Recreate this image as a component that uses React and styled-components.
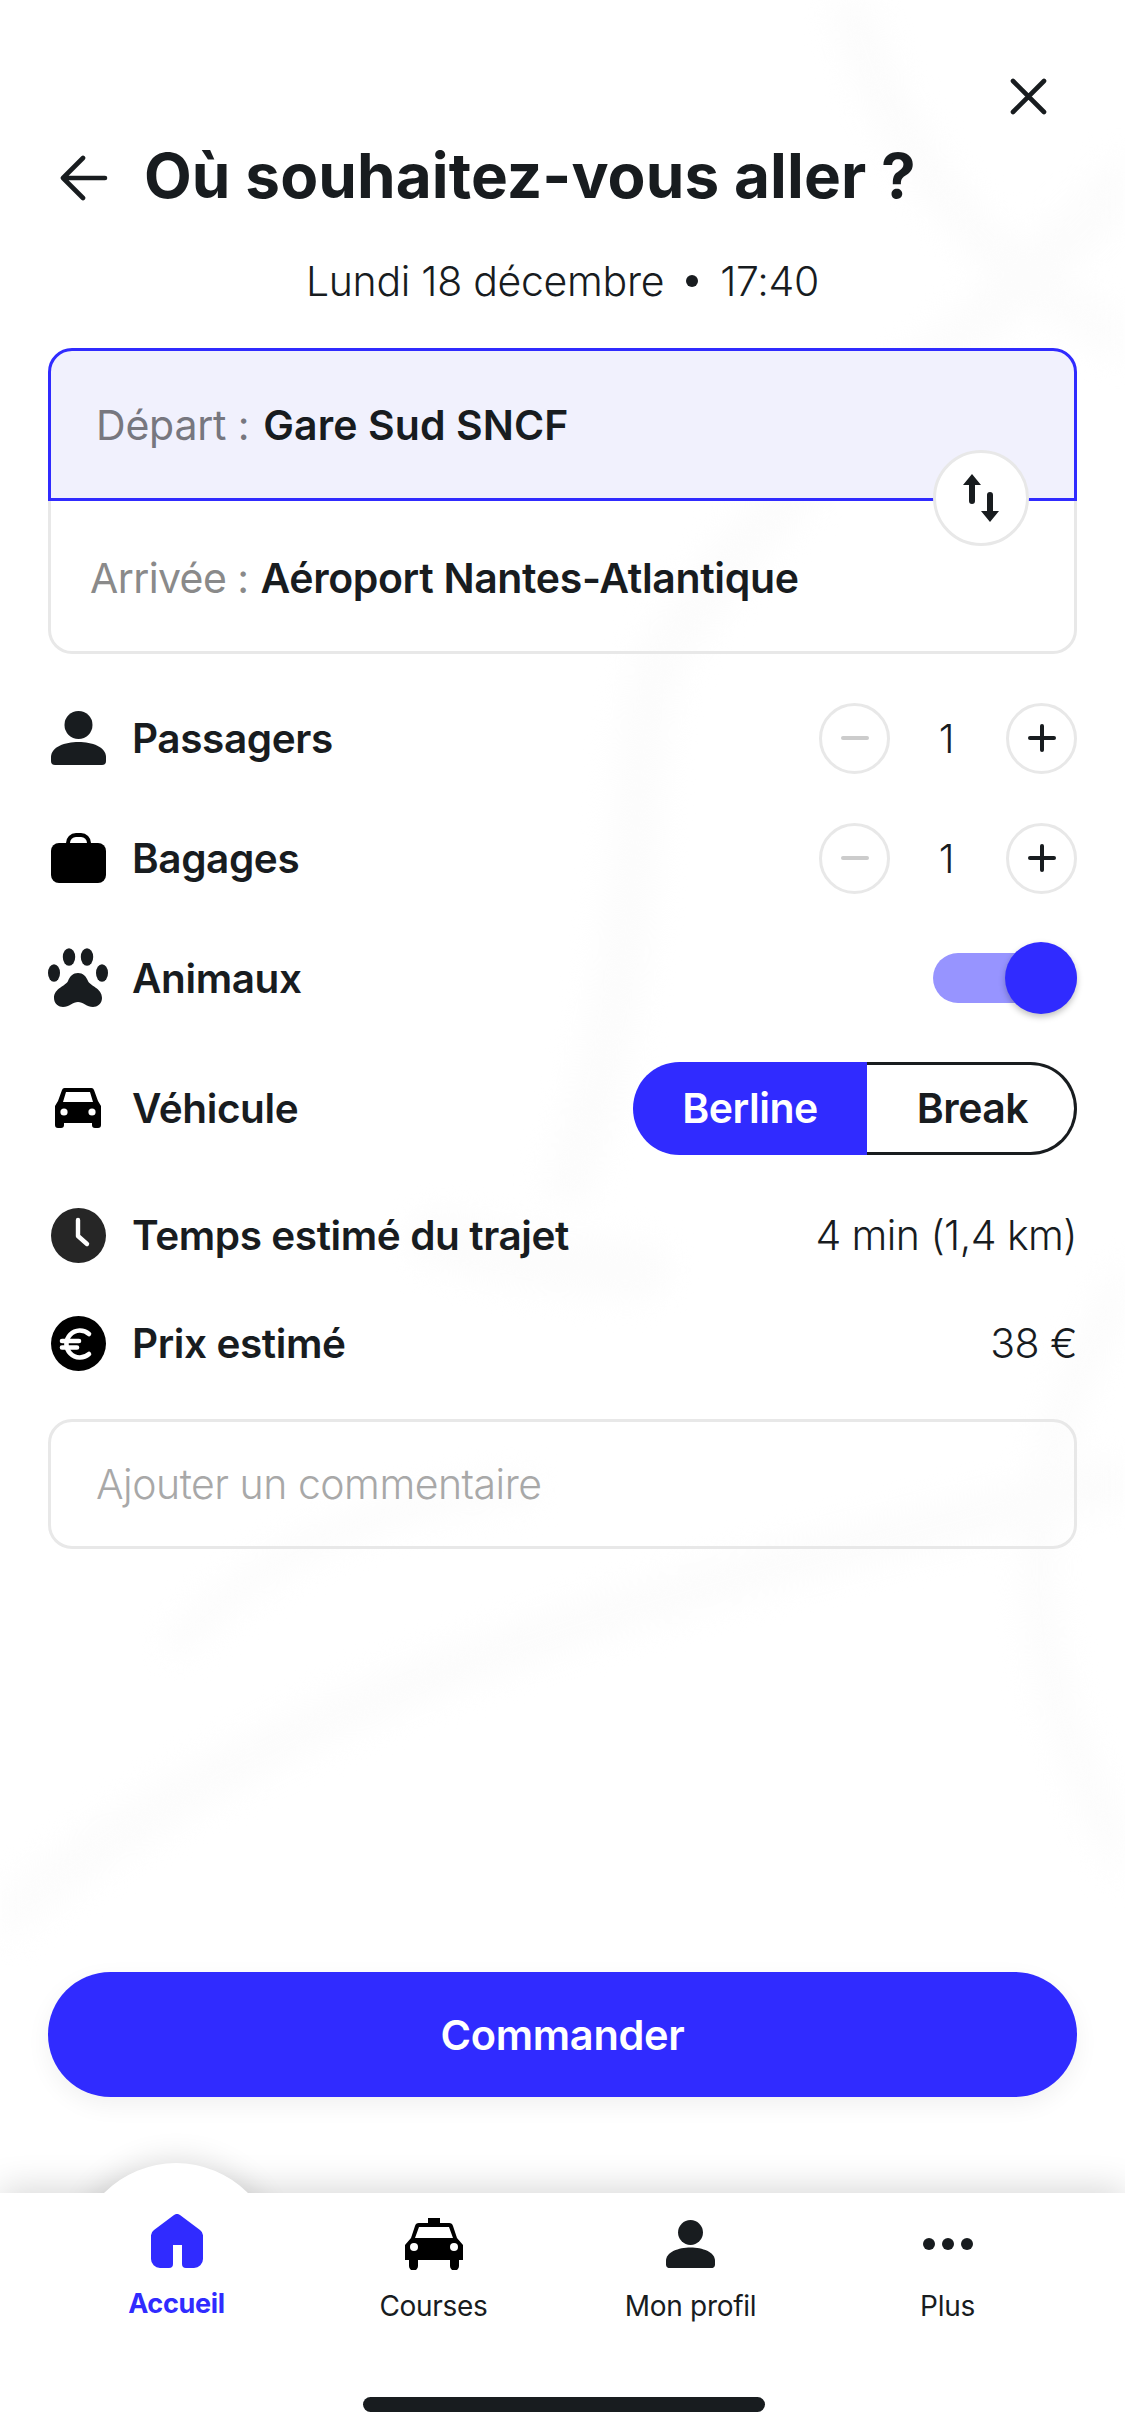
import React from "react";
import styled, { createGlobalStyle } from "styled-components";

const INK = "#181c1f";
const BLUE = "#302bff";
const LINE = "#e8e8e8";

const GlobalStyle = createGlobalStyle`
   html, body {
      margin: 0;
      padding: 0;
      background: #fff;
   }
   * {
      box-sizing: border-box;
   }
`;

const Page = styled.div`
   position: relative;
   width: 1125px;
   height: 2436px;
   overflow: hidden;
   display: flex;
   flex-direction: column;
   background: #fff;
   color: ${INK};
   font-family: "Inter", "Liberation Sans", sans-serif;
`;

const MapLayer = styled.svg`
   position: absolute;
   inset: 0;
   filter: blur(14px);
`;

const Content = styled.div`
   position: relative;
   flex: 1;
   display: flex;
   flex-direction: column;
   padding: 0 48px;
`;

const CloseRow = styled.div`
   display: flex;
   justify-content: flex-end;
   padding: 78px 30px 0 0;
   height: 143px;
`;

const TitleRow = styled.div`
   height: 70px;
   display: flex;
   align-items: center;
   gap: 36px;
   padding-left: 12px;
`;

const Title = styled.h1`
   margin: 0 0 5px;
   font-size: 62px;
   font-weight: 700;
   letter-spacing: 0.1px;
   white-space: nowrap;
`;

const DateLine = styled.div`
   margin: 38px 0 37px;
   height: 60px;
   display: flex;
   align-items: center;
   justify-content: center;
   gap: 22px;
   font-size: 41px;
   font-weight: 300;
   letter-spacing: -0.3px;
`;

const Bullet = styled.span`
   width: 12px;
   height: 12px;
   border-radius: 50%;
   background: ${INK};
`;

const RouteCard = styled.div`
   position: relative;
`;

const RouteField = styled.div`
   height: 153px;
   display: flex;
   align-items: center;
   gap: ${(p) => (p.$active ? 14 : 12)}px;
   padding-left: ${(p) => (p.$active ? 45 : 39)}px;
   padding-top: ${(p) => (p.$active ? 0 : 3)}px;
   font-size: 41px;
   white-space: nowrap;
   background: ${(p) => (p.$active ? "#f1f1fd" : "transparent")};
   border: 3px solid ${(p) => (p.$active ? BLUE : LINE)};
   border-top: ${(p) => (p.$active ? `3px solid ${BLUE}` : "none")};
   border-radius: ${(p) => (p.$active ? "24px 24px 0 0" : "0 0 24px 24px")};
`;

const RouteLabel = styled.span`
   color: ${(p) => (p.$active ? "#77777f" : "#8a8a8a")};
   font-weight: 400;
   letter-spacing: ${(p) => (p.$active ? -0.2 : -0.6)}px;
`;

const RouteValue = styled.span`
   font-weight: 600;
   letter-spacing: ${(p) => (p.$active ? 0.1 : -0.35)}px;
`;

const SwapButton = styled.button`
   position: absolute;
   top: 102px;
   right: 48px;
   width: 96px;
   height: 96px;
   padding: 0;
   border-radius: 50%;
   background: #fff;
   border: 3px solid ${LINE};
   display: flex;
   align-items: center;
   justify-content: center;
`;

const Rows = styled.div`
   margin-top: 24px;
   display: flex;
   flex-direction: column;
`;

const Row = styled.div`
   height: ${(p) => p.$h}px;
   display: flex;
   align-items: center;
   justify-content: space-between;
`;

const RowLabel = styled.div`
   display: flex;
   align-items: center;
   gap: 24px;
   font-size: 40.5px;
   font-weight: 600;
   letter-spacing: -0.4px;
   white-space: nowrap;
`;

const IconSlot = styled.span`
   width: 60px;
   display: flex;
   justify-content: center;
   align-items: center;
`;

const RowValue = styled.div`
   font-size: 41px;
   font-weight: 300;
   letter-spacing: -0.55px;
   white-space: nowrap;
`;

const Stepper = styled.div`
   display: flex;
   align-items: center;
`;

const RoundButton = styled.button`
   width: 71px;
   height: 71px;
   padding: 0;
   border-radius: 50%;
   background: #fff;
   border: 3px solid ${LINE};
   display: flex;
   align-items: center;
   justify-content: center;
`;

const Count = styled.span`
   width: 116px;
   padding-right: 3px;
   text-align: center;
   font-size: 40px;
   font-weight: 300;
`;

const Toggle = styled.div`
   position: relative;
   width: 144px;
   height: 50px;
   border-radius: 25px;
   background: #9794ff;
`;

const Knob = styled.span`
   position: absolute;
   right: 0;
   top: -11px;
   width: 72px;
   height: 72px;
   border-radius: 50%;
   background: ${BLUE};
   box-shadow: 0 3px 6px rgba(0, 0, 0, 0.25);
`;

const Segmented = styled.div`
   width: 444px;
   height: 93px;
   display: flex;
`;

const Segment = styled.div`
   width: ${(p) => (p.$active ? 234 : 210)}px;
   display: flex;
   align-items: center;
   justify-content: center;
   padding-left: ${(p) => (p.$active ? 0 : 4)}px;
   font-size: 41px;
   font-weight: 600;
   letter-spacing: -0.5px;
   background: ${(p) => (p.$active ? BLUE : "#fff")};
   color: ${(p) => (p.$active ? "#fff" : INK)};
   border: ${(p) => (p.$active ? "none" : `3px solid ${INK}`)};
   border-left: none;
   border-radius: ${(p) => (p.$active ? "47px 0 0 47px" : "0 47px 47px 0")};
`;

const CommentBox = styled.div`
   margin-top: 25px;
   height: 130px;
   display: flex;
   align-items: center;
   padding-left: 45px;
   border: 3px solid ${LINE};
   border-radius: 24px;
   font-size: 41px;
   font-weight: 300;
   letter-spacing: -0.5px;
   color: #a8a8a8;
`;

const Spacer = styled.div`
   flex: 1;
`;

const OrderButton = styled.button`
   height: 125px;
   margin-bottom: 96px;
   border: none;
   border-radius: 63px;
   background: ${BLUE};
   color: #fff;
   font-family: inherit;
   font-size: 41.5px;
   font-weight: 600;
   letter-spacing: -0.3px;
   box-shadow: 0 8px 24px rgba(0, 0, 0, 0.06);
`;

const NavShell = styled.nav`
   position: relative;
   height: 243px;
   background: #fff;
   box-shadow: 0 -4px 34px rgba(0, 0, 0, 0.16);
`;

const NavBump = styled.span`
   position: absolute;
   left: 75px;
   top: -30px;
   width: 202px;
   height: 202px;
   border-radius: 50%;
   background: #fff;
   box-shadow: 0 -4px 30px rgba(0, 0, 0, 0.12);
`;

const NavItems = styled.div`
   position: relative;
   height: 100%;
   background: #fff;
   display: grid;
   grid-template-columns: repeat(4, 257px);
   padding-left: 48px;
`;

const NavItem = styled.div`
   display: flex;
   flex-direction: column;
   align-items: center;
   padding-top: ${(p) => (p.$active ? 20 : 23)}px;
`;

const NavIcon = styled.div`
   height: 56px;
   display: flex;
   align-items: center;
   justify-content: center;
`;

const NavLabel = styled.span`
   margin-top: ${(p) => (p.$active ? 19 : 18)}px;
   font-size: ${(p) => (p.$active ? 27 : 28)}px;
   line-height: 32px;
   letter-spacing: -0.3px;
   font-weight: ${(p) => (p.$active ? 700 : 400)};
   color: ${(p) => (p.$active ? BLUE : INK)};
`;

const HomeBar = styled.span`
   position: absolute;
   left: 363px;
   bottom: 24px;
   width: 402px;
   height: 15px;
   border-radius: 8px;
   background: ${INK};
`;

const CloseIcon = () => (
   <svg width="37" height="37" viewBox="0 0 37 37" fill="none" stroke={INK} strokeWidth="4.6" strokeLinecap="round">
      <path d="M3 3 L34 34 M34 3 L3 34" />
   </svg>
);

const BackIcon = () => (
   <svg width="48" height="46" viewBox="0 0 48 46" fill="none" stroke={INK} strokeWidth="4.6" strokeLinecap="round" strokeLinejoin="round">
      <path d="M45 23 H4 M23 3 L3 23 L23 43" />
   </svg>
);

const SwapIcon = () => (
   <svg width="36" height="48" viewBox="0 0 36 48" fill={INK}>
      <path d="M9 0 L18 11 H12 V27 a3 3 0 0 1 -6 0 V11 H0 Z" />
      <path d="M27 48 L18 37 H24 V21 a3 3 0 0 1 6 0 V37 H36 Z" />
   </svg>
);

const MinusIcon = () => (
   <svg width="28" height="6" viewBox="0 0 28 6">
      <rect y="1" width="28" height="4" rx="2" fill="#cccccc" />
   </svg>
);

const PlusIcon = () => (
   <svg width="28" height="28" viewBox="0 0 28 28" fill={INK}>
      <rect y="12" width="28" height="4" rx="2" />
      <rect x="12" width="4" height="28" rx="2" />
   </svg>
);

const PersonIcon = ({ size = 55 }) => (
   <svg width={size} height={(size * 54) / 55} viewBox="0 0 55 54" fill={INK}>
      <circle cx="27.5" cy="14" r="14" />
      <path d="M0 46 C0 36 14 31 27.5 31 S55 36 55 46 V50 a4 4 0 0 1 -4 4 H4 a4 4 0 0 1 -4 -4 Z" />
   </svg>
);

const CaseIcon = () => (
   <svg width="55" height="50" viewBox="0 0 55 50">
      <path d="M17 12 V10 a8 8 0 0 1 8 -8 h5 a8 8 0 0 1 8 8 v2" fill="none" stroke="#000" strokeWidth="4" />
      <rect y="10" width="55" height="40" rx="8" fill="#000" />
   </svg>
);

const PawIcon = () => (
   <svg width="60" height="60" viewBox="0 0 60 60" fill={INK}>
      <ellipse cx="21" cy="9" rx="6.2" ry="8.8" />
      <ellipse cx="39" cy="9" rx="6.2" ry="8.8" />
      <ellipse cx="6" cy="25" rx="6" ry="8.8" />
      <ellipse cx="54" cy="25" rx="6" ry="8.8" />
      <path d="M30 25 c5 0 8 3 10 8 c2 5 14 7 14 17 c0 6 -5 9 -9 9 c-6 0 -10 -5 -15 -5 c-5 0 -9 5 -15 5 c-4 0 -9 -3 -9 -9 c0 -10 12 -12 14 -17 c2 -5 5 -8 10 -8 Z" />
   </svg>
);

const CarIcon = () => (
   <svg width="46" height="40" viewBox="0 0 46 40">
      <path
         fillRule="evenodd"
         d="M10 0 H36 a3 3 0 0 1 3 2 L43 13 L46 18 V37 a3 3 0 0 1 -3 3 H40 a3 3 0 0 1 -3 -3 V35 H9 V37 a3 3 0 0 1 -3 3 H3 a3 3 0 0 1 -3 -3 V18 L3 13 L7 2 a3 3 0 0 1 3 -2 Z M11 4 L8 14 H38 L35 4 Z"
         fill="#000"
      />
      <circle cx="9" cy="24" r="3.6" fill="#fff" />
      <circle cx="37" cy="24" r="3.6" fill="#fff" />
   </svg>
);

const ClockIcon = () => (
   <svg width="55" height="55" viewBox="0 0 55 55">
      <circle cx="27.5" cy="27.5" r="27.5" fill="#262626" />
      <path d="M27 12 V28 L36 36" fill="none" stroke="#fff" strokeWidth="4.4" strokeLinecap="round" strokeLinejoin="round" />
   </svg>
);

const EuroIcon = () => (
   <svg width="55" height="55" viewBox="0 0 55 55">
      <circle cx="27.5" cy="27.5" r="27.5" fill="#000" />
      <path
         d="M38 18 A13.5 13.5 0 1 0 38 38 M11 25 H28 M11 31.5 H26"
         fill="none"
         stroke="#fff"
         strokeWidth="4.6"
         strokeLinecap="round"
      />
   </svg>
);

const HomeIcon = () => (
   <svg width="52" height="54" viewBox="0 0 52 54">
      <path
         fill={BLUE}
         d="M23 1 a5 5 0 0 1 6 0 L49 16 a7 7 0 0 1 3 6 V45 a9 9 0 0 1 -9 9 H35 a4 4 0 0 1 -4 -4 V31 H22 V50 a4 4 0 0 1 -4 4 H9 a9 9 0 0 1 -9 -9 V22 a7 7 0 0 1 3 -6 Z"
      />
   </svg>
);

const TaxiIcon = () => (
   <svg width="58" height="52" viewBox="0 0 58 52">
      <path
         fillRule="evenodd"
         fill="#000"
         d="M23 0 H35 V5 H44 a4 4 0 0 1 4 3 L52 20 L58 27 V42 H54 V48 a4 4 0 0 1 -9 0 V42 H13 V48 a4 4 0 0 1 -9 0 V42 H0 V27 L6 20 L10 8 a4 4 0 0 1 4 -3 H23 Z M14 9 L10 20 H48 L44 9 Z"
      />
      <circle cx="9" cy="29" r="4" fill="#fff" />
      <circle cx="49" cy="29" r="4" fill="#fff" />
   </svg>
);

const DotsIcon = () => (
   <svg width="50" height="12" viewBox="0 0 50 12" fill={INK}>
      <circle cx="6" cy="6" r="6" />
      <circle cx="25" cy="6" r="6" />
      <circle cx="44" cy="6" r="6" />
   </svg>
);

const StepperControl = ({ value }) => (
   <Stepper>
      <RoundButton>
         <MinusIcon />
      </RoundButton>
      <Count>{value}</Count>
      <RoundButton>
         <PlusIcon />
      </RoundButton>
   </Stepper>
);

const navLinks = [
   { label: "Accueil", icon: <HomeIcon />, active: true },
   { label: "Courses", icon: <TaxiIcon /> },
   { label: "Mon profil", icon: <PersonIcon size={49} /> },
   { label: "Plus", icon: <DotsIcon /> },
];

export default function App() {
   return (
      <Page>
         <GlobalStyle />
         <MapLayer width="1125" height="2436" viewBox="0 0 1125 2436" fill="none" stroke="#fcfcfc" strokeLinecap="round">
            <path d="M850 0 C880 120 960 260 1125 340" strokeWidth="44" />
            <path d="M1125 180 C980 340 800 440 660 660 C620 780 660 900 570 1180" strokeWidth="50" />
            <path d="M440 1240 C520 1260 600 1270 640 1270" strokeWidth="60" />
            <path d="M0 1920 C200 1760 420 1660 800 1560 L1125 1480" strokeWidth="46" />
            <path d="M180 1640 C300 1520 420 1500 520 1490" strokeWidth="32" />
            <path d="M1125 1280 C1020 1460 1000 1640 1125 1860" strokeWidth="36" />
         </MapLayer>
         <Content>
            <CloseRow>
               <CloseIcon />
            </CloseRow>
            <TitleRow>
               <BackIcon />
               <Title>Où souhaitez-vous aller ?</Title>
            </TitleRow>
            <DateLine>
               <span>Lundi 18 décembre</span>
               <Bullet />
               <span>17:40</span>
            </DateLine>
            <RouteCard>
               <RouteField $active>
                  <RouteLabel $active>Départ :</RouteLabel>
                  <RouteValue $active>Gare Sud SNCF</RouteValue>
               </RouteField>
               <RouteField>
                  <RouteLabel>Arrivée :</RouteLabel>
                  <RouteValue>Aéroport Nantes-Atlantique</RouteValue>
               </RouteField>
               <SwapButton>
                  <SwapIcon />
               </SwapButton>
            </RouteCard>
            <Rows>
               <Row $h={120}>
                  <RowLabel>
                     <IconSlot>
                        <PersonIcon />
                     </IconSlot>
                     Passagers
                  </RowLabel>
                  <StepperControl value={1} />
               </Row>
               <Row $h={120}>
                  <RowLabel>
                     <IconSlot>
                        <CaseIcon />
                     </IconSlot>
                     Bagages
                  </RowLabel>
                  <StepperControl value={1} />
               </Row>
               <Row $h={120}>
                  <RowLabel>
                     <IconSlot>
                        <PawIcon />
                     </IconSlot>
                     Animaux
                  </RowLabel>
                  <Toggle>
                     <Knob />
                  </Toggle>
               </Row>
               <Row $h={140}>
                  <RowLabel>
                     <IconSlot>
                        <CarIcon />
                     </IconSlot>
                     Véhicule
                  </RowLabel>
                  <Segmented>
                     <Segment $active>Berline</Segment>
                     <Segment>Break</Segment>
                  </Segmented>
               </Row>
               <Row $h={114}>
                  <RowLabel>
                     <IconSlot>
                        <ClockIcon />
                     </IconSlot>
                     Temps estimé du trajet
                  </RowLabel>
                  <RowValue>4 min (1,4 km)</RowValue>
               </Row>
               <Row $h={102}>
                  <RowLabel>
                     <IconSlot>
                        <EuroIcon />
                     </IconSlot>
                     Prix estimé
                  </RowLabel>
                  <RowValue>38 €</RowValue>
               </Row>
            </Rows>
            <CommentBox>Ajouter un commentaire</CommentBox>
            <Spacer />
            <OrderButton>Commander</OrderButton>
         </Content>
         <NavShell>
            <NavBump />
            <NavItems>
               {navLinks.map((link) => (
                  <NavItem key={link.label} $active={link.active}>
                     <NavIcon>{link.icon}</NavIcon>
                     <NavLabel $active={link.active}>{link.label}</NavLabel>
                  </NavItem>
               ))}
            </NavItems>
            <HomeBar />
         </NavShell>
      </Page>
   );
}
